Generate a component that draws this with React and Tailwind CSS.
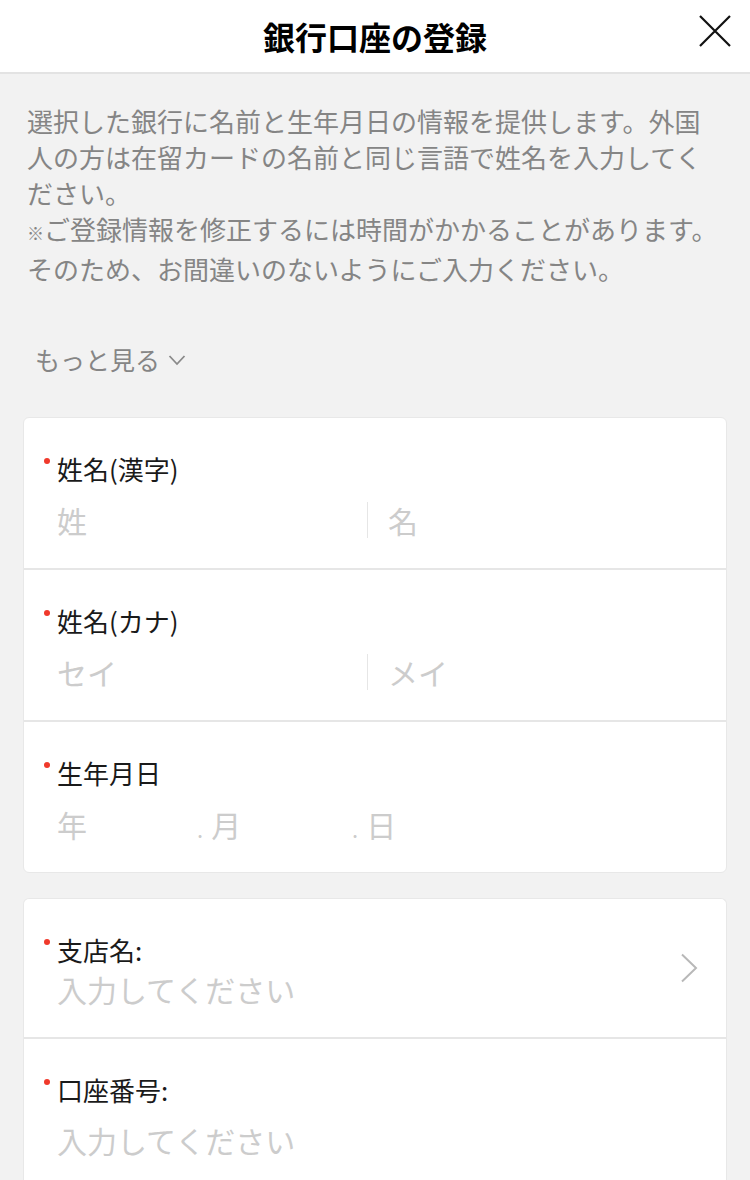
import React from "react"

const font = { fontFamily: '"Noto Sans CJK JP", "Noto Sans", sans-serif' }

const Label = ({ children }) => (
  <div className="flex items-start pl-[20px] h-[30px]">
    <span className="w-[6px] h-[6px] rounded-full bg-[#f0392b] mt-[4px] mr-[7px] shrink-0"></span>
    <span className="text-[26px] leading-[30px] text-[#1a1a1a]">{children}</span>
  </div>
)

const SplitRow = ({ label, left, right, top }) => (
  <div className={`pt-[36px] ${top ? "h-[152px] border-t-2 border-[#e6e6e6]" : "h-[150px]"}`}>
    <Label>{label}</Label>
    <div className="flex items-center mt-[16px] pl-[33px] h-[40px]">
      <span className="w-[310px] text-[30px] leading-[40px] text-[#cccccc]">{left}</span>
      <span className="w-[1px] h-[36px] bg-[#e6e6e6]"></span>
      <span className="pl-[20px] text-[30px] leading-[40px] text-[#cccccc]">{right}</span>
    </div>
  </div>
)

export default function App() {
  return (
    <div className="min-h-screen w-[750px] bg-[#f2f2f2]" style={font}>
      <div className="h-[72px] bg-white flex items-center justify-center relative">
        <h1 className="text-[32px] font-bold text-black leading-none">銀行口座の登録</h1>
        <svg className="absolute right-[19px] top-[15px]" width="32" height="32" viewBox="0 0 32 32">
          <path d="M1 1 L31 31 M31 1 L1 31" stroke="#111" strokeWidth="2.2" fill="none" />
        </svg>
      </div>
      <div className="h-[2px] bg-[#e3e3e3]"></div>

      <div className="px-[27px] pt-[29px] text-[26px] leading-[36px] text-[#858585] whitespace-nowrap">
        <div>選択した銀行に名前と生年月日の情報を提供します。外国</div>
        <div>人の方は在留カードの名前と同じ言語で姓名を入力してく</div>
        <div>ださい。</div>
        <div>
          <span className="text-[17px]">※</span>ご登録情報を修正するには時間がかかることがあります。
        </div>
        <div>そのため、お間違いのないようにご入力ください。</div>
      </div>

      <div className="flex items-center pl-[35px] mt-[54px] h-[36px] text-[25px] text-[#858585]">
        <span className="leading-[36px]">もっと見る</span>
        <svg className="ml-[8px] mt-[2px]" width="18" height="12" viewBox="0 0 18 12">
          <path d="M1.5 2 L9 10 L16.5 2" stroke="#8a8a8a" strokeWidth="1.8" fill="none" />
        </svg>
      </div>

      <div className="mx-[23px] mt-[40px] bg-white border border-[#e8e8e8] rounded-[6px]">
        <SplitRow label="姓名(漢字)" left="姓" right="名" />
        <SplitRow label="姓名(カナ)" left="セイ" right="メイ" top />
        <div className="h-[152px] pt-[36px] border-t-2 border-[#e6e6e6]">
          <Label>生年月日</Label>
          <div className="flex items-center mt-[16px] pl-[33px] h-[40px] text-[30px] leading-[40px] text-[#cccccc]">
            <span className="w-[140px]">年</span>
            <span className="w-[155px] flex items-center">
              <span className="text-[22px] mr-[8px] mt-[8px]">.</span>月
            </span>
            <span className="flex items-center">
              <span className="text-[22px] mr-[8px] mt-[8px]">.</span>日
            </span>
          </div>
        </div>
      </div>

      <div className="mx-[23px] mt-[25px] bg-white border border-[#e8e8e8] rounded-t-[6px] border-b-0">
        <div className="h-[138px] flex items-center pr-[28px]">
          <div className="flex-1 pt-[8px]">
            <Label>支店名:</Label>
            <div className="mt-[4px] pl-[33px] text-[30px] leading-[40px] text-[#cccccc]">入力してください</div>
          </div>
          <svg width="18" height="30" viewBox="0 0 18 30">
            <path d="M2 1.5 L16 15 L2 28.5" stroke="#b8b8b8" strokeWidth="2" fill="none" />
          </svg>
        </div>
        <div className="h-[150px] pt-[36px] border-t-2 border-[#e6e6e6]">
          <Label>口座番号:</Label>
          <div className="mt-[15px] pl-[33px] text-[30px] leading-[40px] text-[#cccccc]">入力してください</div>
        </div>
      </div>
    </div>
  )
}
